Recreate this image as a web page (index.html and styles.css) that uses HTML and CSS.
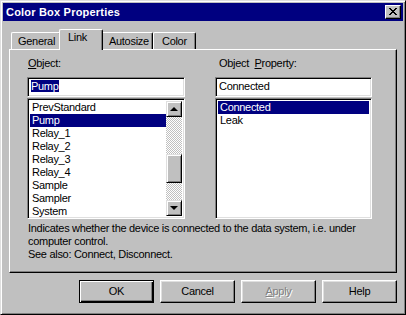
FILE: index.html
```html
<!DOCTYPE html>
<html lang="en">
<head>
	<meta charset="UTF-8">
	<title>Color Box Properties</title>
	<link rel="stylesheet" href="styles.css">
</head>
<body>
	<div class="window">
		<div class="titlebar">
			<span class="title">Color Box Properties</span>
			<span class="close">
				<svg width="8" height="7" viewBox="0 0 8 7" shape-rendering="crispEdges">
					<path d="M0 0h2v1h1v1h2v-1h1v-1h2v1h-1v1h-1v1h-1v1h1v1h1v1h1v1h-2v-1h-1v-1h-2v1h-1v1h-2v-1h1v-1h1v-1h1v-1h-1v-1h-1v-1h-1z" fill="#000"/>
				</svg>
			</span>
		</div>
		<div class="body">
			<div class="tabs">
				<div class="tab">General</div>
				<div class="tab active">Link</div>
				<div class="tab">Autosize</div>
				<div class="tab">Color</div>
			</div>
			<div class="panel">
				<div class="cols">
					<div class="col left">
						<div class="label"><u>O</u>bject:</div>
						<div class="field"><span class="sel">Pump</span></div>
						<div class="list">
							<div class="items">
								<div class="item">PrevStandard</div>
								<div class="item selected">Pump</div>
								<div class="item">Relay_1</div>
								<div class="item">Relay_2</div>
								<div class="item">Relay_3</div>
								<div class="item">Relay_4</div>
								<div class="item">Sample</div>
								<div class="item">Sampler</div>
								<div class="item">System</div>
							</div>
							<div class="scrollbar">
								<div class="sbtn"><span class="arrow up"></span></div>
								<div class="track"><div class="thumb"></div></div>
								<div class="sbtn"><span class="arrow down"></span></div>
							</div>
						</div>
					</div>
					<div class="col right">
						<div class="label">Object&nbsp; <u>P</u>roperty:</div>
						<div class="field">Connected</div>
						<div class="list">
							<div class="items">
								<div class="item selected">Connected</div>
								<div class="item">Leak</div>
							</div>
						</div>
					</div>
				</div>
				<p class="desc">Indicates whether the device is connected to the data system, i.e. under computer control.<br>See also: Connect, Disconnect.</p>
			</div>
			<div class="buttons">
				<div class="btn default">OK</div>
				<div class="btn">Cancel</div>
				<div class="btn disabled"><u>A</u>pply</div>
				<div class="btn">Help</div>
			</div>
		</div>
	</div>
</body>
</html>
```

FILE: styles.css
```css
*{
	padding:0;
	margin:0;
	box-sizing: border-box;
}
body{
	background: #c0c0c0;
	font: 11px/13px "Liberation Sans", Arial, sans-serif;
	letter-spacing: -0.3px;
	color: #000;
}
.window{
	width: 406px;
	height: 315px;
	padding: 2px;
	border: 1px solid;
	border-color: #dfdfdf #000 #000 #dfdfdf;
	box-shadow: inset 1px 1px #fff, inset -1px -1px #808080;
	background: #c0c0c0;
}
.titlebar{
	display: flex;
	align-items: center;
	justify-content: space-between;
	height: 18px;
	padding: 0 2px 0 3px;
	background: #000080;
	color: #fff;
}
.title{
	font-weight: bold;
	letter-spacing: 0.2px;
}
.close{
	display: flex;
	align-items: center;
	justify-content: center;
	width: 16px;
	height: 14px;
	padding: 0 1px 1px 0;
	background: #c0c0c0;
	border: 1px solid;
	border-color: #fff #000 #000 #fff;
	box-shadow: inset -1px -1px #808080;
}
.body{
	padding: 8px 6px 0;
}
.tabs{
	display: flex;
	align-items: flex-end;
	height: 20px;
	padding-left: 2px;
}
.tab{
	height: 17px;
	padding: 2px 0 0 6px;
	border: 1px solid;
	border-bottom: none;
	border-color: #fff #000 #000 #fff;
	border-radius: 2px 2px 0 0;
	box-shadow: inset -1px 0 #808080;
}
.tab:nth-child(1){ width: 50px; }
.tab:nth-child(3){ width: 52px; padding-left: 7px; }
.tab:nth-child(4){ width: 43px; padding-left: 8px; }
.tab.active{
	position: relative;
	z-index: 1;
	width: 44px;
	height: 21px;
	margin: 0 -2px -1px;
	padding: 1px 0 0 8px;
	background: #c0c0c0;
}
.panel{
	height: 224px;
	padding: 7px 0 0 17px;
	border: 1px solid;
	border-color: #fff #000 #000 #fff;
	box-shadow: inset -1px -1px #808080;
}
.cols{
	display: flex;
	gap: 30px;
}
.col.left{ width: 158px; }
.col.right{ width: 157px; }
.label{
	padding-left: 1px;
	margin-bottom: 7px;
}
.right .label{
	padding-left: 4px;
}
.field, .list{
	border: 1px solid;
	border-color: #808080 #fff #fff #808080;
	box-shadow: inset 1px 1px #000, inset -1px -1px #dfdfdf;
	background: #fff;
}
.field{
	height: 20px;
	padding: 2px 3px;
	white-space: nowrap;
}
.sel{
	background: #000080;
	color: #fff;
}
.list{
	display: flex;
	height: 121px;
	margin-top: 1px;
	padding: 2px;
}
.items{
	flex: 1;
}
.item{
	height: 13px;
	padding-left: 2px;
	white-space: nowrap;
}
.item.selected{
	background: #000080;
	color: #fff;
}
.scrollbar{
	display: flex;
	flex-direction: column;
	width: 16px;
}
.sbtn, .thumb{
	height: 16px;
	background: #c0c0c0;
	border: 1px solid;
	border-color: #dfdfdf #000 #000 #dfdfdf;
	box-shadow: inset 1px 1px #fff, inset -1px -1px #808080;
}
.sbtn{
	display: flex;
	align-items: center;
	justify-content: center;
	padding: 0 1px 1px 0;
}
.arrow{
	width: 0;
	height: 0;
	border-left: 4px solid transparent;
	border-right: 4px solid transparent;
}
.arrow.up{ border-bottom: 4px solid #000; }
.arrow.down{ border-top: 4px solid #000; }
.track{
	flex: 1;
	background: repeating-conic-gradient(#c0c0c0 0 25%, #fff 0 50%) 0 0/2px 2px;
}
.thumb{
	height: 29px;
	margin-top: 37px;
}
.desc{
	margin-top: 3px;
	padding-left: 1px;
	width: 358px;
}
.buttons{
	display: flex;
	justify-content: flex-end;
	gap: 6px;
	margin-top: 7px;
}
.btn{
	width: 75px;
	height: 23px;
	line-height: 21px;
	text-align: center;
	border: 1px solid;
	border-color: #fff #000 #000 #fff;
	box-shadow: inset -1px -1px #808080, inset 1px 1px #dfdfdf;
}
.btn.default{
	border-color: #000;
	box-shadow: inset 1px 1px #fff, inset -1px -1px #000, inset -2px -2px #808080;
}
.btn.disabled{
	color: #808080;
	text-shadow: 1px 1px #fff;
}
```
